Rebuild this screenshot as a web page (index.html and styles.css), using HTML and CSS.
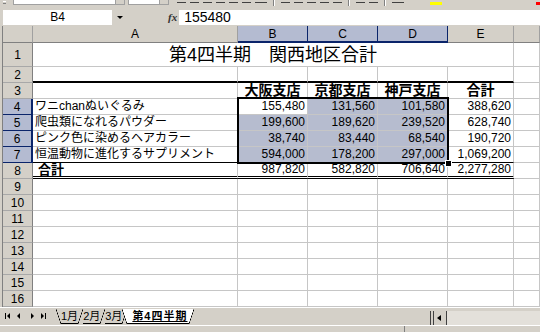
FILE: index.html
```html
<!DOCTYPE html>
<html lang="ja">
<head>
    <meta charset="UTF-8">
    <title>第4四半期 関西地区合計</title>
    <link rel="stylesheet" href="styles.css">
</head>
<body>
    <!-- Formatting toolbar (only the bottom edge is visible) -->
    <div class="toolbar">
        <span class="tb-grip"></span>
        <span class="tb-box tb-font"></span><span class="tb-drop"></span>
        <span class="tb-box tb-size"></span><span class="tb-drop"></span>
        <span class="tb-icon" style="margin-left:8px"></span>
        <span class="tb-icon"></span>
        <span class="tb-icon"></span>
        <span class="tb-icon"></span>
        <span class="tb-icon"></span>
        <span class="tb-icon"></span>
        <span class="tb-icon tb-wide"></span>
        <span class="tb-sep"></span>
        <span class="tb-icon"></span>
        <span class="tb-icon"></span>
        <span class="tb-icon"></span>
        <span class="tb-icon"></span>
        <span class="tb-icon"></span>
        <span class="tb-sep"></span>
        <span class="tb-icon"></span>
        <span class="tb-icon"></span>
        <span class="tb-sep"></span>
        <span class="tb-icon tb-wide"></span>
        <span class="tb-fill"></span>
        <span class="tb-font-color"></span>
    </div>

    <!-- Formula bar -->
    <div class="formula-bar">
        <div class="name-box">B4</div>
        <span class="name-drop"></span>
        <span class="fx">fx</span>
        <div class="formula-input">155480</div>
    </div>

    <!-- Worksheet -->
    <div class="sheet">
        <div class="corner"></div>
        <div class="ch">A</div>
        <div class="ch sel">B</div>
        <div class="ch sel">C</div>
        <div class="ch sel">D</div>
        <div class="ch">E</div>
        <div class="ch"></div>

        <div class="rh">1</div>
        <div class="c title">第4四半期　関西地区合計</div>
        <div class="c"></div>

        <div class="rh">2</div>
        <div class="c b2"></div>
        <div class="c b2"></div>
        <div class="c b2"></div>
        <div class="c b2"></div>
        <div class="c b2"></div>
        <div class="c"></div>

        <div class="rh">3</div>
        <div class="c"></div>
        <div class="c head">大阪支店</div>
        <div class="c head">京都支店</div>
        <div class="c head">神戸支店</div>
        <div class="c head">合計</div>
        <div class="c"></div>

        <div class="rh sel">4</div>
        <div class="c">ワニchanぬいぐるみ</div>
        <div class="c num active">155,480</div>
        <div class="c num sel">131,560</div>
        <div class="c num sel">101,580</div>
        <div class="c num">388,620</div>
        <div class="c"></div>

        <div class="rh sel">5</div>
        <div class="c">爬虫類になれるパウダー</div>
        <div class="c num sel">199,600</div>
        <div class="c num sel">189,620</div>
        <div class="c num sel">239,520</div>
        <div class="c num">628,740</div>
        <div class="c"></div>

        <div class="rh sel">6</div>
        <div class="c">ピンク色に染めるヘアカラー</div>
        <div class="c num sel">38,740</div>
        <div class="c num sel">83,440</div>
        <div class="c num sel">68,540</div>
        <div class="c num">190,720</div>
        <div class="c"></div>

        <div class="rh sel">7</div>
        <div class="c b1">恒温動物に進化するサプリメント</div>
        <div class="c num sel b1">594,000</div>
        <div class="c num sel b1">178,200</div>
        <div class="c num sel b1">297,000</div>
        <div class="c num b1">1,069,200</div>
        <div class="c"></div>

        <div class="rh">8</div>
        <div class="c dbl total">合計</div>
        <div class="c num dbl">987,820</div>
        <div class="c num dbl">582,820</div>
        <div class="c num dbl">706,640</div>
        <div class="c num dbl">2,277,280</div>
        <div class="c"></div>

        <div class="rh">9</div><div class="c"></div><div class="c"></div><div class="c"></div><div class="c"></div><div class="c"></div><div class="c"></div>
        <div class="rh">10</div><div class="c"></div><div class="c"></div><div class="c"></div><div class="c"></div><div class="c"></div><div class="c"></div>
        <div class="rh">11</div><div class="c"></div><div class="c"></div><div class="c"></div><div class="c"></div><div class="c"></div><div class="c"></div>
        <div class="rh">12</div><div class="c"></div><div class="c"></div><div class="c"></div><div class="c"></div><div class="c"></div><div class="c"></div>
        <div class="rh">13</div><div class="c"></div><div class="c"></div><div class="c"></div><div class="c"></div><div class="c"></div><div class="c"></div>
        <div class="rh">14</div><div class="c"></div><div class="c"></div><div class="c"></div><div class="c"></div><div class="c"></div><div class="c"></div>
        <div class="rh">15</div><div class="c"></div><div class="c"></div><div class="c"></div><div class="c"></div><div class="c"></div><div class="c"></div>
        <div class="rh">16</div><div class="c"></div><div class="c"></div><div class="c"></div><div class="c"></div><div class="c"></div><div class="c"></div>

        <!-- Selection frame B4:D7, drawn over the cells -->
        <div class="selection"><span class="fill-handle"></span></div>
    </div>

    <!-- Sheet tabs and horizontal scroll bar -->
    <div class="tab-bar">
        <div class="tab-nav">
            <svg width="52" height="14" viewBox="0 0 52 14">
                <rect x="3" y="4" width="1" height="6" fill="#000"/>
                <path d="M8 4 L5 7 L8 10 Z" fill="#000"/>
                <path d="M18 4 L15 7 L18 10 Z" fill="#000"/>
                <path d="M29 4 L32 7 L29 10 Z" fill="#000"/>
                <path d="M39 4 L42 7 L39 10 Z" fill="#000"/>
                <rect x="43" y="4" width="1" height="6" fill="#000"/>
            </svg>
        </div>
        <div class="tabs">
            <span class="tab first">1月</span>
            <span class="tab">2月</span>
            <span class="tab">3月</span>
            <span class="tab active">第4四半期</span>
        </div>
        <div class="tab-spacer"></div>
        <div class="split-box"></div>
        <div class="scroll-btn">
            <svg width="8" height="8" viewBox="0 0 8 8"><path d="M5 1 L1 4 L5 7 Z" fill="#000"/></svg>
        </div>
        <div class="scroll-track"></div>
    </div>

    <div class="status-bar">
        <span class="status-pane"></span>
    </div>
</body>
</html>
```

FILE: styles.css
```css
/* ----- Colours ----- */
:root {
    --chrome: #d4d0c8;
    --chrome-dark: #808080;
    --grid: #c6c6c6;
    --sel-fill: #b6bccf;
    --sel-head: #b4bbd1;
    --sel-line: #0a246a;
}

/* ----- Reset ----- */
* {
    margin: 0;
    padding: 0;
    box-sizing: border-box;
}

body {
    width: 540px;
    height: 332px;
    overflow: hidden;
    background: var(--chrome);
    font-family: "Liberation Sans", "Noto Sans CJK JP", sans-serif;
    font-size: 12px;
    color: #000;
}

/* ----- Toolbar ----- */
.toolbar {
    height: 8px;
    display: flex;
    align-items: flex-start;
    overflow: hidden;
}

.tb-grip {
    width: 3px;
    height: 3px;
    margin: 1px 7px 0 3px;
    border-top: 1px solid #fff;
    border-bottom: 1px solid var(--chrome-dark);
}

.tb-box {
    height: 5px;
    background: #fff;
    border: 1px solid #a0a0a0;
    border-top: none;
}

.tb-font { width: 103px; }
.tb-size { width: 32px; margin-left: 3px; }

.tb-drop {
    width: 9px;
    height: 5px;
    background: var(--chrome);
    border: 1px solid #a0a0a0;
    border-top: none;
    border-left: none;
}

.tb-icon {
    width: 9px;
    height: 3px;
    margin: 0 2px;
    border-bottom: 1px solid #404040;
}

.tb-wide { width: 12px; }

.tb-sep {
    width: 2px;
    height: 6px;
    margin: 0 4px;
    border-left: 1px solid var(--chrome-dark);
    border-right: 1px solid #fff;
}

.tb-fill {
    width: 12px;
    height: 3px;
    margin: 2px 0 0 24px;
    background: #ffff00;
}

.tb-font-color {
    width: 4px;
    height: 3px;
    margin: 2px 0 0 auto;
    background: #ff0000;
}

/* ----- Formula Bar ----- */
.formula-bar {
    height: 18px;
    display: flex;
    align-items: center;
    padding-left: 3px;
}

.name-box {
    width: 109px;
    height: 15px;
    background: #fff;
    text-align: center;
    line-height: 15px;
    font-size: 12px;
}

.name-drop {
    margin-left: 5px;
    border-left: 3px solid transparent;
    border-right: 3px solid transparent;
    border-top: 3px solid #000;
}

.fx {
    margin-left: 45px;
    font-family: "Liberation Serif", serif;
    font-style: italic;
    font-weight: bold;
    font-size: 11px;
    color: #333;
}

.formula-input {
    flex: 1;
    height: 15px;
    margin-left: 2px;
    padding-left: 5px;
    background: #fff;
    font-size: 14px;
    line-height: 15px;
}

/* ----- Worksheet Grid ----- */
.sheet {
    position: relative;
    height: 281px;
    margin-left: 2px;
    border-left: 1px solid var(--chrome-dark);
    background: #fff;
    display: grid;
    grid-template-columns: 30px 205px 70px 70px 70px 66px 1fr;
    grid-template-rows: 17px 24px repeat(15, 16px);
}

.corner,
.ch {
    background: var(--chrome);
    border-right: 1px solid #a0a0a0;
    border-bottom: 1px solid var(--chrome-dark);
}

.ch {
    display: flex;
    align-items: center;
    justify-content: center;
    font-size: 12px;
}

.ch.sel {
    background: var(--sel-head);
    border-right-color: var(--sel-line);
    border-bottom: 2px solid var(--sel-line);
}

.rh {
    background: var(--chrome);
    border-right: 1px solid var(--chrome-dark);
    border-bottom: 1px solid #a8a8a8;
    display: flex;
    align-items: center;
    justify-content: center;
    line-height: 14px;
}

.rh.sel {
    background: var(--sel-head);
    border-bottom-color: var(--sel-line);
    border-right: 2px solid var(--sel-line);
}

.c {
    border-right: 1px solid var(--grid);
    border-bottom: 1px solid var(--grid);
    padding: 0 2px 1px;
    display: flex;
    align-items: flex-end;
    line-height: 14px;
    white-space: nowrap;
}

.c.num {
    justify-content: flex-end;
}

.c.sel {
    background: var(--sel-fill);
}

.c.active {
    background: #fff;
}

.c.head {
    justify-content: center;
    font-size: 14px;
    font-weight: bold;
    line-height: 15px;
    padding-bottom: 0;
}

.c.b2 { border-bottom: 2px solid #000; }
.c.b1 { border-bottom: 1px solid #000; }

.c.dbl {
    border-bottom: 3px double #000;
    padding-bottom: 0;
    line-height: 13px;
}

.c.total {
    padding-left: 5px;
    font-size: 13px;
    font-weight: bold;
}

.title {
    grid-column: 2 / 7;
    justify-content: center;
    font-size: 18px;
    line-height: 20px;
    padding-bottom: 1px;
}

/* ----- Selection Frame ----- */
.selection {
    position: absolute;
    top: 71px;
    left: 234px;
    width: 212px;
    height: 67px;
    border: 2px solid #000;
    pointer-events: none;
}

.fill-handle {
    position: absolute;
    right: -5px;
    bottom: -5px;
    width: 7px;
    height: 7px;
    background: #000;
    border: 1px solid #fff;
}

/* ----- Sheet Tabs ----- */
.tab-bar {
    height: 18px;
    display: flex;
    align-items: flex-start;
    border-top: 1px solid #fff;
}

.tab-nav {
    width: 54px;
    height: 15px;
    padding: 1px 0 0 2px;
}

.tabs {
    display: flex;
    height: 16px;
    padding: 1px 0 0 2px;
}

.tab {
    height: 15px;
    padding: 0 5px;
    margin-left: -5px;
    font-size: 11px;
    line-height: 14px;
    background:
        linear-gradient(to top left, transparent calc(50% - 0.6px), #000 50%, transparent calc(50% + 0.6px)) right / 5px 100% no-repeat,
        linear-gradient(#000, #000) center bottom / calc(100% - 10px) 1px no-repeat;
}

.tab.first {
    margin-left: 0;
    background:
        linear-gradient(to top right, transparent calc(50% - 0.6px), #000 50%, transparent calc(50% + 0.6px)) left / 5px 100% no-repeat,
        linear-gradient(to top left, transparent calc(50% - 0.6px), #000 50%, transparent calc(50% + 0.6px)) right / 5px 100% no-repeat,
        linear-gradient(#000, #000) center bottom / calc(100% - 10px) 1px no-repeat;
}

.tab.active {
    padding: 0 6px 0 10px;
    font-weight: bold;
    letter-spacing: 1px;
    text-decoration: underline;
    background:
        linear-gradient(to top right, transparent calc(50% - 0.6px), #000 50%, #fff calc(50% + 0.6px)) left / 5px 100% no-repeat,
        linear-gradient(to top left, transparent calc(50% - 0.6px), #000 50%, #fff calc(50% + 0.6px)) right / 5px 100% no-repeat,
        linear-gradient(#000, #000) center bottom / calc(100% - 10px) 1px no-repeat,
        linear-gradient(#fff, #fff) center / calc(100% - 10px) 100% no-repeat;
}

.tab-spacer {
    flex: 1;
}

.split-box {
    width: 4px;
    height: 14px;
    margin-top: 3px;
    border-left: 1px solid #404040;
    border-right: 1px solid #404040;
}

.scroll-btn {
    width: 13px;
    height: 14px;
    margin-top: 3px;
    display: flex;
    align-items: center;
    justify-content: center;
    background: var(--chrome);
    border-right: 1px solid #404040;
}

.scroll-track {
    width: 93px;
    height: 14px;
    margin-top: 3px;
    background: #e3e0da;
}

/* ----- Status Bar ----- */
.status-bar {
    height: 7px;
    border-top: 1px solid #fff;
    display: flex;
}

.status-pane {
    width: 1px;
    height: 6px;
    margin-left: 404px;
    background: var(--chrome-dark);
}
```
